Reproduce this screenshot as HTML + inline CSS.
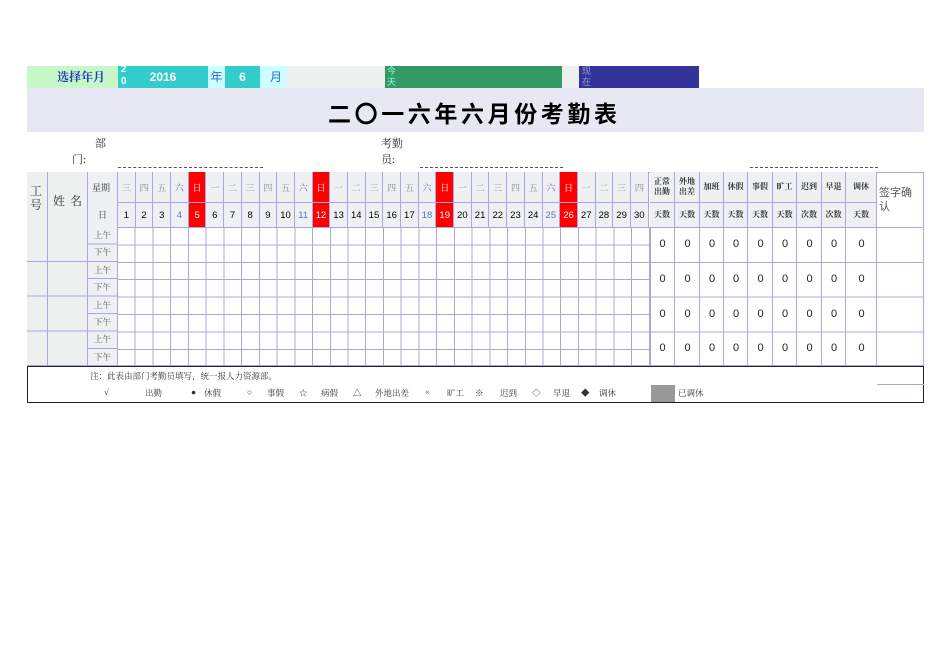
<!DOCTYPE html>
<html><head><meta charset="utf-8"><style>
*{margin:0;padding:0;box-sizing:border-box}
body{width:950px;height:672px;background:#fff;position:relative;font-family:"Liberation Sans","Noto Sans CJK SC",sans-serif;overflow:hidden}
.a{position:absolute}
.s{font-family:"Liberation Serif","Noto Serif CJK SC",serif}
.row{position:absolute;display:flex}
.row div{border-right:1px solid #a8a8e0;display:flex;align-items:center;justify-content:center;font-size:9.5px;color:#000;flex:none}
.wk div{background:#eef0f3;color:#888;font-family:"Noto Serif CJK SC",serif;font-size:9px}
.dy div{background:#eef0f3;font-size:9.5px}
.r{background:#f00!important;color:#fff!important}
.b{color:#5577bb!important}
.sm div{font-family:"Noto Serif CJK SC",serif;font-size:8px;font-weight:bold;line-height:10px;text-align:center}
.lg{position:absolute;top:387px;font-size:8.5px;color:#333;font-family:"Liberation Serif","Noto Serif CJK SC",serif;white-space:nowrap}
</style></head><body>
<!-- top bar -->
<div class="a" style="left:27px;top:66px;width:91px;height:22px;background:#c8f7c8;color:#1a3fbf;font-size:12px;font-weight:bold;line-height:22px;padding-left:30px;font-family:'Noto Serif CJK SC',serif">选择年月</div>
<div class="a" style="left:118px;top:66px;width:90px;height:22px;background:#33cccc;color:#fff;font-weight:bold;font-size:12px;line-height:22px;text-align:center">2016</div>
<div class="a" style="left:121px;top:64px;color:#fff;font-size:10px;font-weight:bold;line-height:12px">2<br>0</div>
<div class="a" style="left:208px;top:66px;width:17px;height:22px;background:#ccffff;color:#3366cc;font-size:12px;line-height:22px;text-align:center">年</div>
<div class="a" style="left:225px;top:66px;width:35px;height:22px;background:#33cccc;color:#fff;font-weight:bold;font-size:12px;line-height:22px;text-align:center">6</div>
<div class="a" style="left:260px;top:66px;width:27px;height:22px;background:#ccffff;color:#3366cc;font-size:12px;line-height:22px;padding-left:10px">月</div>
<div class="a" style="left:287px;top:66px;width:98px;height:22px;background:#eef0f0"></div>
<div class="a" style="left:385px;top:66px;width:177px;height:22px;background:#339966;color:#9fd;font-size:9px;line-height:11px;padding-left:2px">今<br>天</div>
<div class="a" style="left:562px;top:66px;width:17px;height:22px;background:#eef0f0"></div>
<div class="a" style="left:579px;top:66px;width:120px;height:22px;background:#333399;color:#99c;font-size:9px;line-height:11px;padding-left:3px">现<br>在</div>
<!-- title -->
<div class="a" style="left:27px;top:88px;width:897px;height:44px;background:#e6e9f3"></div>
<div class="a" style="left:328px;top:95px;width:320px;white-space:nowrap;font-size:23px;font-weight:bold;letter-spacing:3.6px;line-height:34px;font-family:'Noto Sans CJK SC',sans-serif;color:#000">二〇一六年六月份考勤表</div>
<!-- dept -->
<div class="a s" style="left:95px;top:135px;font-size:11px;color:#333">部</div>
<div class="a s" style="left:72px;top:151px;font-size:11px;color:#333">门:</div>
<div class="a" style="left:118px;top:167px;width:145px;border-top:1px dashed #555"></div>
<div class="a s" style="left:381px;top:135px;font-size:11px;color:#333">考勤</div>
<div class="a s" style="left:381px;top:151px;font-size:11px;color:#333">员:</div>
<div class="a" style="left:420px;top:167px;width:143px;border-top:1px dashed #555"></div>
<div class="a" style="left:750px;top:167px;width:128px;border-top:1px dashed #555"></div>
<!-- table -->
<div class="a" style="left:27px;top:172px;width:897px;height:194px;border:1px solid #a8a8e0"></div>
<div class="a" style="left:27px;top:172px;width:21px;height:194px;background:#eef0f0;border-right:1px solid #a8a8e0"></div>
<div class="a" style="left:48px;top:172px;width:40px;height:194px;background:#eef0f0;border-right:1px solid #a8a8e0"></div>
<div class="a s" style="left:30px;top:184px;font-size:12px;line-height:14px;color:#333">工<br>号</div>
<div class="a s" style="left:53px;top:192px;font-size:12px;color:#333;letter-spacing:5px">姓名</div>
<div class="a" style="left:88px;top:172px;width:30px;height:55px;background:#eef0f3;border-right:1px solid #a8a8e0"></div>
<div class="a s" style="left:92px;top:181px;font-size:9px;color:#333">星期</div>
<div class="a s" style="left:98px;top:208px;font-size:9px;color:#333">日</div>
<div class="row wk" style="left:118px;top:172px;height:30px">
<div style="width:17.7px">三</div><div style="width:17.7px">四</div><div style="width:17.7px">五</div><div style="width:17.7px" class="b">六</div><div style="width:17.7px" class="r">日</div><div style="width:17.7px">一</div><div style="width:17.7px">二</div><div style="width:17.7px">三</div><div style="width:17.7px">四</div><div style="width:17.7px">五</div><div style="width:17.7px" class="b">六</div><div style="width:17.7px" class="r">日</div><div style="width:17.7px">一</div><div style="width:17.7px">二</div><div style="width:17.7px">三</div><div style="width:17.7px">四</div><div style="width:17.7px">五</div><div style="width:17.7px" class="b">六</div><div style="width:17.7px" class="r">日</div><div style="width:17.7px">一</div><div style="width:17.7px">二</div><div style="width:17.7px">三</div><div style="width:17.7px">四</div><div style="width:17.7px">五</div><div style="width:17.7px" class="b">六</div><div style="width:17.7px" class="r">日</div><div style="width:17.7px">一</div><div style="width:17.7px">二</div><div style="width:17.7px">三</div><div style="width:17.7px">四</div>
</div>
<div class="row dy" style="left:118px;top:202px;height:25px;border-top:1px solid #a8a8e0">
<div style="width:17.7px">1</div><div style="width:17.7px">2</div><div style="width:17.7px">3</div><div style="width:17.7px" class="b">4</div><div style="width:17.7px" class="r">5</div><div style="width:17.7px">6</div><div style="width:17.7px">7</div><div style="width:17.7px">8</div><div style="width:17.7px">9</div><div style="width:17.7px">10</div><div style="width:17.7px" class="b">11</div><div style="width:17.7px" class="r">12</div><div style="width:17.7px">13</div><div style="width:17.7px">14</div><div style="width:17.7px">15</div><div style="width:17.7px">16</div><div style="width:17.7px">17</div><div style="width:17.7px" class="b">18</div><div style="width:17.7px" class="r">19</div><div style="width:17.7px">20</div><div style="width:17.7px">21</div><div style="width:17.7px">22</div><div style="width:17.7px">23</div><div style="width:17.7px">24</div><div style="width:17.7px" class="b">25</div><div style="width:17.7px" class="r">26</div><div style="width:17.7px">27</div><div style="width:17.7px">28</div><div style="width:17.7px">29</div><div style="width:17.7px">30</div>
</div>
<div class="row wk sm" style="left:650px;top:172px;height:30px">
<div style="width:25px;color:#333">正常<br>出勤</div><div style="width:25px;color:#333">外地<br>出差</div><div style="width:24px;color:#333">加班</div><div style="width:24px;color:#333">休假</div><div style="width:25px;color:#333">事假</div><div style="width:24px;color:#333">旷工</div><div style="width:25px;color:#333">迟到</div><div style="width:24px;color:#333">早退</div><div style="width:31px;color:#333">调休</div>
</div>
<div class="row wk sm" style="left:650px;top:202px;height:25px;border-top:1px solid #a8a8e0">
<div style="width:25px;color:#333">天数</div><div style="width:25px;color:#333">天数</div><div style="width:24px;color:#333">天数</div><div style="width:24px;color:#333">天数</div><div style="width:25px;color:#333">天数</div><div style="width:24px;color:#333">天数</div><div style="width:25px;color:#333">次数</div><div style="width:24px;color:#333">次数</div><div style="width:31px;color:#333">天数</div>
</div>
<div class="a" style="left:879px;top:185px;font-size:11px;color:#555;line-height:14px;font-family:'Noto Sans CJK SC',sans-serif">签字确<br>认</div>
<!-- body grid -->
<div class="a" style="left:118px;top:227px;width:532px;height:139px;border-top:1px solid #a8a8e0;background:repeating-linear-gradient(90deg,transparent 0,transparent 16.73px,#a8a8e0 16.73px,#a8a8e0 17.73px),repeating-linear-gradient(180deg,transparent 0,transparent 16.4px,#a8a8e0 16.4px,#a8a8e0 17.4px)"></div>
<div class="a" style="left:88px;top:227px;width:30px;height:139px;background:#eef0f3;border-right:1px solid #a8a8e0;font-family:'Noto Serif CJK SC',serif;font-size:8.5px;color:#555;line-height:17.4px;text-align:center">上午<br>下午<br>上午<br>下午<br>上午<br>下午<br>上午<br>下午</div>
<div class="a" style="left:88px;top:227px;width:30px;height:139px;background:repeating-linear-gradient(180deg,transparent 0,transparent 16.4px,#a8a8e0 16.4px,#a8a8e0 17.4px)"></div>
<div class="a" style="left:27px;top:227px;width:61px;height:139px;background:repeating-linear-gradient(180deg,transparent 0,transparent 33.8px,#a8a8e0 33.8px,#a8a8e0 34.8px)"></div>
<div class="a" style="left:650px;top:227px;width:274px;height:139px;border-left:1px solid #a8a8e0;border-top:1px solid #a8a8e0;background:repeating-linear-gradient(180deg,transparent 0,transparent 33.8px,#a8a8e0 33.8px,#a8a8e0 34.8px)"></div>
<div class="row" style="left:650px;top:227px;height:139px">
<div style="width:25px">&nbsp;</div><div style="width:25px"></div><div style="width:24px"></div><div style="width:24px"></div><div style="width:25px"></div><div style="width:24px"></div><div style="width:25px"></div><div style="width:24px"></div><div style="width:31px"></div>
</div>
<div class="a" style="left:650px;top:227px;width:227px;font-size:11px;line-height:34.8px;color:#222">
<div style="display:flex;text-align:center"><span style="width:25px">0</span><span style="width:25px">0</span><span style="width:24px">0</span><span style="width:24px">0</span><span style="width:25px">0</span><span style="width:24px">0</span><span style="width:25px">0</span><span style="width:24px">0</span><span style="width:31px">0</span></div>
<div style="display:flex;text-align:center"><span style="width:25px">0</span><span style="width:25px">0</span><span style="width:24px">0</span><span style="width:24px">0</span><span style="width:25px">0</span><span style="width:24px">0</span><span style="width:25px">0</span><span style="width:24px">0</span><span style="width:31px">0</span></div>
<div style="display:flex;text-align:center"><span style="width:25px">0</span><span style="width:25px">0</span><span style="width:24px">0</span><span style="width:24px">0</span><span style="width:25px">0</span><span style="width:24px">0</span><span style="width:25px">0</span><span style="width:24px">0</span><span style="width:31px">0</span></div>
<div style="display:flex;text-align:center"><span style="width:25px">0</span><span style="width:25px">0</span><span style="width:24px">0</span><span style="width:24px">0</span><span style="width:25px">0</span><span style="width:24px">0</span><span style="width:25px">0</span><span style="width:24px">0</span><span style="width:31px">0</span></div>
</div>
<!-- footer -->
<div class="a" style="left:27px;top:366px;width:897px;height:37px;border:1px solid #222"></div>
<div class="a s" style="left:90px;top:370px;font-size:8.5px;color:#333">注：此表由部门考勤员填写，统一报人力资源部。</div>
<span class="lg" style="left:104px">√</span>
<span class="lg" style="left:145px">出勤</span>
<span class="lg" style="left:191px">●</span>
<span class="lg" style="left:204px">休假</span>
<span class="lg" style="left:247px">○</span>
<span class="lg" style="left:267px">事假</span>
<span class="lg" style="left:299px">☆</span>
<span class="lg" style="left:321px">病假</span>
<span class="lg" style="left:353px">△</span>
<span class="lg" style="left:375px">外地出差</span>
<span class="lg" style="left:425px">×</span>
<span class="lg" style="left:447px">旷工</span>
<span class="lg" style="left:475px">※</span>
<span class="lg" style="left:500px">迟到</span>
<span class="lg" style="left:532px">◇</span>
<span class="lg" style="left:553px">早退</span>
<span class="lg" style="left:581px">◆</span>
<span class="lg" style="left:599px">调休</span>
<div class="a" style="left:651px;top:385px;width:24px;height:17px;background:#999"></div>
<div class="a s" style="left:678px;top:387px;font-size:8.5px;color:#333">已调休</div>
<div class="a" style="left:877px;top:384px;width:47px;border-top:1px solid #a8a8e0"></div>
</body></html>
